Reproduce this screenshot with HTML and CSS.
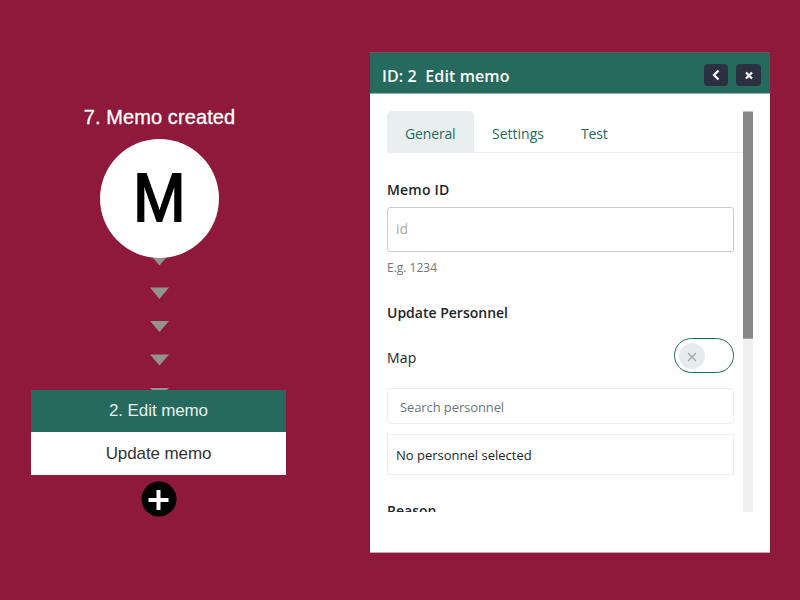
FILE: index.html
```html
<!DOCTYPE html>
<html lang="en">
<head>
<meta charset="utf-8">
<title>Edit memo</title>
<link rel="stylesheet" href="styles.css">
</head>
<body>
<main class="workspace">
  <section class="flow">
    <div class="flow-title">7. Memo created</div>
    <div class="trigger"><span class="initial">M</span></div>
    <svg class="connector" width="20" height="132" viewBox="0 0 20 132">
      <path d="M4 0H17L10.500 7.500ZM1 29.500H20L10.500 41ZM1 63H20L10.500 74ZM1 96.500H20L10.500 107.500ZM1 130H20L18 132H3Z"/>
    </svg>
    <div class="step">
      <div class="step-head">2. Edit memo</div>
      <div class="step-body">Update memo</div>
    </div>
    <svg class="add" width="36" height="36" viewBox="0 0 36 36">
      <circle cx="18" cy="18" r="17.500"/>
      <path d="M17.500 9V29M7.500 19H27.500"/>
    </svg>
  </section>

  <section class="panel">
    <header class="panel-head">
      <h1 class="panel-title">ID: 2&nbsp; Edit memo</h1>
      <button class="icon-btn" aria-label="Back"><svg width="10" height="12" viewBox="0 0 10 12"><path d="M7.500 1.500L3 6L7.500 10.500"/></svg></button>
      <button class="icon-btn close" aria-label="Close"><svg width="10" height="12" viewBox="0 0 10 12"><path d="M2 3.500L8 9.500M8 3.500L2 9.500"/></svg></button>
    </header>
    <div class="scroll">
      <div class="content">
        <nav class="tabs">
          <span class="tab active">General</span>
          <span class="tab settings">Settings</span>
          <span class="tab test">Test</span>
        </nav>
        <div class="form">
          <div class="label memo-label">Memo ID</div>
          <div class="field id-field">id</div>
          <div class="hint">E.g. 1234</div>
          <div class="label personnel-label">Update Personnel</div>
          <div class="map-row">
            <span class="map-label">Map</span>
            <span class="toggle"><span class="knob"><svg width="10" height="10" viewBox="0 0 10 10"><path d="M1 1L9 9M9 1L1 9"/></svg></span></span>
          </div>
          <div class="field search">Search personnel</div>
          <div class="field selected">No personnel selected</div>
          <div class="label reason-label">Reason</div>
        </div>
      </div>
      <div class="scrollbar"><div class="thumb"></div></div>
    </div>
  </section>
</main>
</body>
</html>
```

FILE: styles.css
```css
* { box-sizing: border-box; }

body {
  margin: 0;
  width: 800px;
  height: 600px;
  overflow: hidden;
  background: #8e193b;
  font-family: "Open Sans", "Noto Sans", sans-serif;
  color: #212529;
}

.workspace {
  display: flex;
  align-items: flex-start;
  gap: 84px;
  padding: 52px 30px 0 31px;
  height: 600px;
}

.flow {
  display: flex;
  flex-direction: column;
  align-items: center;
  width: 255px;
  padding-top: 53px;
  font-family: "Liberation Sans", sans-serif;
}

.flow-title {
  height: 34px;
  line-height: 25px;
  font-size: 20px;
  letter-spacing: .1px;
  color: #fff;
  -webkit-text-stroke: .3px #fff;
  margin-left: 2px;
  white-space: nowrap;
}

.trigger {
  display: flex;
  align-items: center;
  justify-content: center;
  width: 119px;
  height: 119px;
  margin-left: 2px;
  border-radius: 50%;
  background: #fff;
  color: #000;
  font-size: 68px;
  line-height: 119px;
  -webkit-text-stroke: 2px #000;
}
.initial { transform: translateY(-1.5px) scale(.93, 1.01); }

.connector { display: block; fill: #959190; margin-left: 1px; }

.step {
  width: 255px;
  text-align: center;
  font-size: 17px;
  letter-spacing: -.1px;
}

.step-head { height: 42px; line-height: 42px; background: #266a5d; color: #e4efed; }
.step-body { height: 43px; line-height: 43px; background: #fff; color: #333; }

.add { display: block; margin-top: 6px; }
.add path { stroke: #fff; stroke-width: 4; }

.panel {
  width: 400px;
  height: 501px;
  background: #fff;
  border-top: 1px solid #6f525b;
  border-bottom: 1px solid #cda5b1;
}

.panel-head {
  display: flex;
  align-items: center;
  height: 41px;
  padding: 4px 9px 0 12px;
  background: #266a5d;
  border-bottom: 1px solid #92b4ae;
}

.panel-title {
  flex: 1;
  margin: 0;
  padding-top: 2px;
  color: #fff;
  font-size: 16px;
  font-weight: 600;
  letter-spacing: .1px;
  line-height: 20px;
}

.icon-btn {
  display: flex;
  align-items: center;
  justify-content: center;
  width: 24px;
  height: 22px;
  padding: 0;
  border: 0;
  border-radius: 4px;
  background: #2b3140;
}
.icon-btn.close { width: 25px; margin-left: 8px; }
.icon-btn path { fill: none; stroke: #fff; stroke-width: 2.2; }

.scroll {
  display: flex;
  height: 401px;
  margin: 17px 17px 0;
  overflow: hidden;
}

.content { width: 356px; flex: none; }

.tabs { display: flex; height: 42px; border-bottom: 1px solid #e9efee; }
.tab {
  height: 42px;
  padding: 0 18px;
  line-height: 46px;
  font-size: 14px;
  color: #266a5d;
}
.tab.active { width: 87px; background: #e9efee; border-radius: 5px 5px 0 0; }
.tab.settings { width: 89px; }
.tab.active, .tab.test { letter-spacing: -.15px; }

.form { width: 347px; }

.label { font-size: 14px; font-weight: 600; line-height: 20px; white-space: nowrap; }
.memo-label { margin-top: 27px; letter-spacing: .2px; }

.field { border: 1px solid #e9efee; white-space: nowrap; }
.id-field {
  height: 45px;
  margin-top: 7px;
  padding-left: 8px;
  border-color: #ccc;
  border-radius: 3px;
  font-size: 14px;
  line-height: 41px;
  color: #aaa;
}
.hint { margin-top: 8px; font-size: 12px; line-height: 16px; color: #6c757d; }
.personnel-label { margin-top: 27px; }

.map-row {
  display: flex;
  align-items: center;
  justify-content: space-between;
  height: 35px;
  margin-top: 15px;
}
.map-label { font-size: 14px; line-height: 20px; padding-top: 5px; letter-spacing: .2px; }
.toggle {
  display: flex;
  align-items: center;
  width: 60px;
  height: 35px;
  padding-left: 4px;
  border: 1px solid #266a5d;
  border-radius: 18px;
}
.knob {
  display: flex;
  align-items: center;
  justify-content: center;
  width: 26px;
  height: 26px;
  padding-top: 2px;
  border-radius: 50%;
  background: #e6ecee;
}
.knob path { fill: none; stroke: #a0a7a9; stroke-width: 1.3; }

.search {
  height: 36px;
  margin-top: 15px;
  padding-left: 12px;
  border-radius: 4px;
  font-size: 13px;
  letter-spacing: -.1px;
  line-height: 37px;
  color: #6c757d;
}
.selected {
  height: 41px;
  margin-top: 10px;
  padding-left: 8px;
  font-size: 13px;
  line-height: 40px;
}
.reason-label { margin-top: 26px; }

.scrollbar { width: 10px; background: #f0f0f0; }
.thumb { height: 228px; background: #888; border-top: 1px solid #c0c0c0; border-bottom: 1px solid #a8a8a8; }
```
